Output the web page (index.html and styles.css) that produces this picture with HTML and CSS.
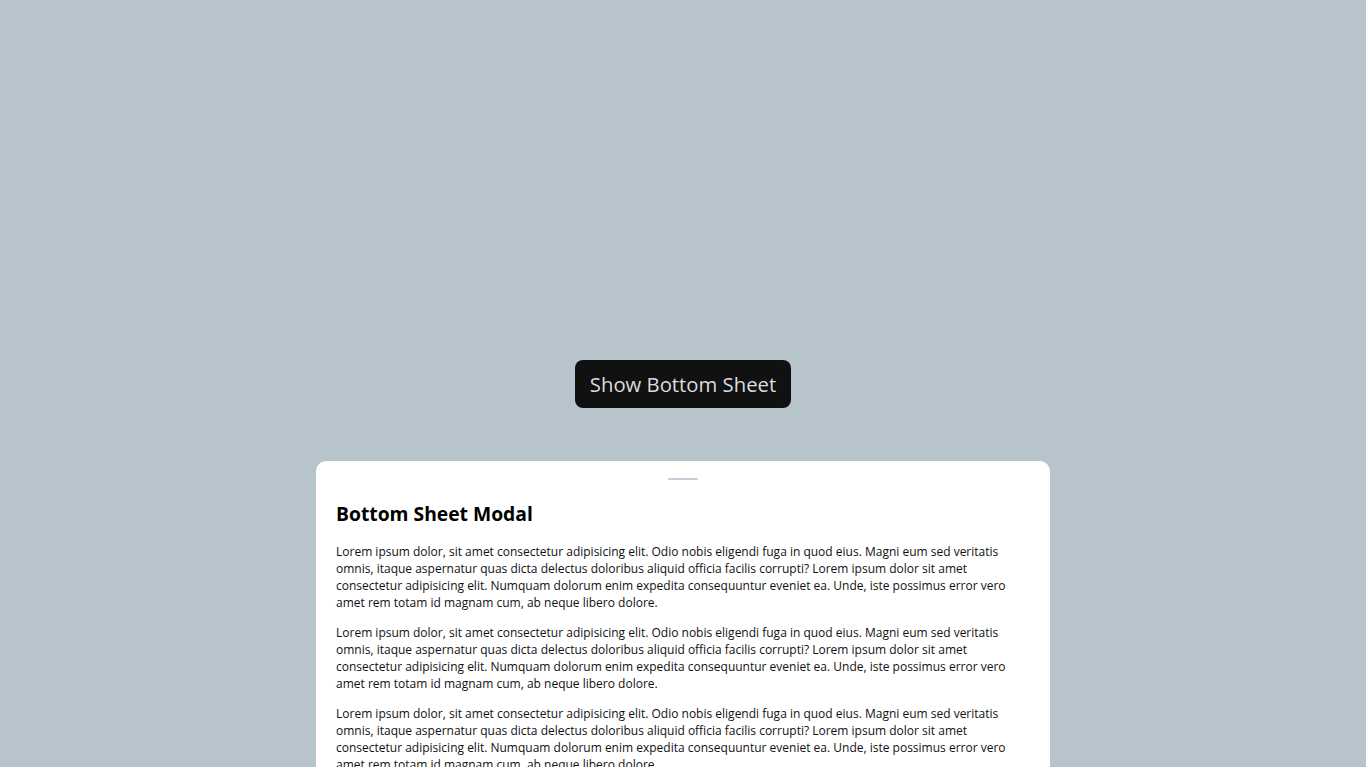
FILE: index.html
```html
<!DOCTYPE html>
<html lang="en">
<head>
<meta charset="utf-8">
<title>Bottom Sheet Modal</title>
<link rel="stylesheet" href="styles.css">
</head>
<body>
<main class="page">
  <button class="show-btn" type="button">Show Bottom Sheet</button>
</main>
<section class="sheet">
  <div class="sheet-handle"></div>
  <div class="sheet-body">
    <h2 class="sheet-title">Bottom Sheet Modal</h2>
    <p class="sheet-text">Lorem ipsum dolor, sit amet consectetur adipisicing elit. Odio nobis eligendi fuga in quod eius. Magni eum sed veritatis omnis, itaque aspernatur quas dicta delectus doloribus aliquid officia facilis corrupti? Lorem ipsum dolor sit amet consectetur adipisicing elit. Numquam dolorum enim expedita consequuntur eveniet ea. Unde, iste possimus error vero amet rem totam id magnam cum, ab neque libero dolore.</p>
    <p class="sheet-text">Lorem ipsum dolor, sit amet consectetur adipisicing elit. Odio nobis eligendi fuga in quod eius. Magni eum sed veritatis omnis, itaque aspernatur quas dicta delectus doloribus aliquid officia facilis corrupti? Lorem ipsum dolor sit amet consectetur adipisicing elit. Numquam dolorum enim expedita consequuntur eveniet ea. Unde, iste possimus error vero amet rem totam id magnam cum, ab neque libero dolore.</p>
    <p class="sheet-text">Lorem ipsum dolor, sit amet consectetur adipisicing elit. Odio nobis eligendi fuga in quod eius. Magni eum sed veritatis omnis, itaque aspernatur quas dicta delectus doloribus aliquid officia facilis corrupti? Lorem ipsum dolor sit amet consectetur adipisicing elit. Numquam dolorum enim expedita consequuntur eveniet ea. Unde, iste possimus error vero amet rem totam id magnam cum, ab neque libero dolore.</p>
  </div>
</section>
</body>
</html>
```
FILE: styles.css
```css
* { box-sizing: border-box; }
html, body { margin: 0; height: 100%; }
body {
  background: #b8c4cc;
  font-family: "Open Sans", "Liberation Sans", sans-serif;
  overflow: hidden;
}
.page {
  height: 100vh;
  display: flex;
  align-items: center;
  justify-content: center;
}
.show-btn {
  width: 216px;
  height: 48px;
  border: none;
  border-radius: 8px;
  background: #111111;
  color: #dcdcdc;
  font-family: inherit;
  font-size: 20.3px;
  padding: 0;
  cursor: pointer;
}
.sheet {
  position: fixed;
  top: 461px;
  left: 316px;
  width: 734px;
  height: 500px;
  background: #ffffff;
  border-radius: 10px 10px 0 0;
}
.sheet-handle {
  width: 30px;
  height: 2px;
  margin: 17px auto 0;
  background: #c6cedb;
  border-radius: 1px;
}
.sheet-body {
  padding: 20px 20px 0;
}
.sheet-title {
  margin: 0 0 15px;
  font-size: 19.3px;
  line-height: 28px;
  font-weight: 700;
  color: #000;
}
.sheet-text {
  margin: 0 0 13px;
  font-size: 12px;
  line-height: 17px;
  color: #111;
}
```
